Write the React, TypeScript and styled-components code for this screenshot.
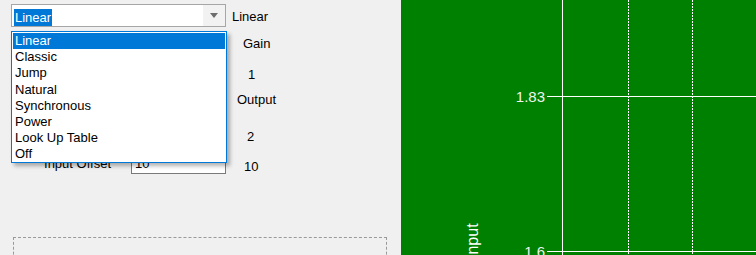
import { createGlobalStyle, styled } from 'styled-components';

const GlobalStyle = createGlobalStyle`
  html, body {
    margin: 0;
    padding: 0;
    background: #f0f0f0;
  }

  body {
    font-family: 'Liberation Sans', Arial, sans-serif;
    font-size: 13px;
    color: #000;
  }
`;

const curveTypes = ['Linear', 'Classic', 'Jump', 'Natural', 'Synchronous', 'Power', 'Look Up Table', 'Off'];

const values = [
  { text: 'Linear', top: 9, left: 6 },
  { text: 'Gain', top: 11, left: 17 },
  { text: '1', top: 15, left: 22 },
  { text: 'Output', top: 9, left: 11 },
  { text: '2', top: 21, left: 21 },
  { text: '10', top: 14, left: 18 },
];

const App = () => {
  return (
    <>
      <GlobalStyle />
      <Window>
        <SettingsPanel>
          <Controls>
            <ComboBox>
              <ComboText>
                <Selection>Linear</Selection>
              </ComboText>
              <ComboButton>
                <Arrow />
              </ComboButton>
            </ComboBox>
            <FieldRow>
              <FieldLabel>Input Offset</FieldLabel>
              <TextBox>10</TextBox>
            </FieldRow>
            <GroupBox />
          </Controls>
          <ValueColumn>
            {values.map((v, i) => (
              <Value key={i} $top={v.top} $left={v.left}>
                {v.text}
              </Value>
            ))}
          </ValueColumn>
          <DropList>
            {curveTypes.map((name, i) => (
              <ListItem key={name} $selected={i === 0}>
                {name}
              </ListItem>
            ))}
          </DropList>
        </SettingsPanel>
        <ChartPanel>
          <svg width="355" height="255" viewBox="0 0 355 255">
            <line x1="161.5" y1="0" x2="161.5" y2="255" stroke="#fff" strokeWidth="1" />
            <line x1="227.5" y1="0" x2="227.5" y2="255" stroke="#fff" strokeWidth="1" strokeDasharray="2 1" />
            <line x1="291.5" y1="0" x2="291.5" y2="255" stroke="#fff" strokeWidth="1" strokeDasharray="2 1" />
            <line x1="146" y1="96.5" x2="355" y2="96.5" stroke="#fff" strokeWidth="1" />
            <line x1="146" y1="251.5" x2="355" y2="251.5" stroke="#fff" strokeWidth="1" />
            <AxisText x="144" y="102" textAnchor="end">
              1.83
            </AxisText>
            <AxisText x="144" y="257" textAnchor="end">
              1.6
            </AxisText>
            <AxisTitle x="0" y="0" transform="translate(77 259) rotate(-90)">
              Input
            </AxisTitle>
          </svg>
        </ChartPanel>
      </Window>
    </>
  );
};

export default App;

const Window = styled.div`
  width: 756px;
  height: 255px;
  overflow: hidden;

  display: flex;
`;

const SettingsPanel = styled.div`
  position: relative;
  width: 401px;
  flex-shrink: 0;
  padding-left: 11px;
  box-sizing: border-box;

  display: flex;
  background: #f0f0f0;
`;

const Controls = styled.div`
  width: 215px;
  flex-shrink: 0;
  padding-top: 4px;

  display: flex;
  flex-direction: column;
`;

const ComboBox = styled.div`
  width: 215px;
  height: 27px;
  box-sizing: border-box;

  display: flex;
  border: 1px solid #a6a6a6;
  background: #fff;
`;

const ComboText = styled.div`
  flex: 1;
  padding: 4px 0 0 2px;
`;

const Selection = styled.span`
  display: inline-block;
  padding: 1px 1px;
  line-height: 15px;
  background: #0078d7;
  color: #fff;
`;

const ComboButton = styled.div`
  width: 22px;

  display: flex;
  align-items: center;
  justify-content: center;
  background: #f2f2f2;
`;

const Arrow = styled.div`
  width: 0;
  height: 0;
  border-left: 4px solid transparent;
  border-right: 4px solid transparent;
  border-top: 5px solid #6d6d6d;
`;

const FieldRow = styled.div`
  margin-top: 126px;
  height: 21px;

  display: flex;
  align-items: center;
`;

const FieldLabel = styled.span`
  width: 120px;
  flex-shrink: 0;
  padding-right: 20px;
  box-sizing: border-box;
  text-align: right;
`;

const TextBox = styled.div`
  width: 95px;
  height: 21px;
  flex-shrink: 0;
  box-sizing: border-box;
  padding: 2px 0 0 3px;

  border: 1px solid #7a7a7a;
  background: #fff;
`;

const GroupBox = styled.div`
  margin: 63px 0 0 2px;
  width: 372px;
  height: 40px;
  flex-shrink: 0;

  border: 1px dashed #9a9a9a;
`;

const ValueColumn = styled.div`
  display: flex;
  flex-direction: column;
`;

const Value = styled.span<{ $top: number; $left: number }>`
  margin: ${(p) => p.$top}px 0 0 ${(p) => p.$left}px;
  line-height: 16px;
  white-space: nowrap;
`;

const DropList = styled.div`
  position: absolute;
  left: 11px;
  top: 31px;
  width: 216px;
  height: 132px;
  box-sizing: border-box;
  padding: 1px 1px;

  border: 1px solid #0078d7;
  background: #fff;
  box-shadow: 3px 3px 4px rgba(0, 0, 0, 0.3);
`;

const ListItem = styled.div<{ $selected: boolean }>`
  height: 16.2px;
  line-height: 16px;
  padding-left: 2px;

  background: ${(p) => (p.$selected ? '#0078d7' : 'transparent')};
  color: ${(p) => (p.$selected ? '#fff' : '#000')};
`;

const ChartPanel = styled.div`
  flex: 1;
  height: 255px;
  background: #008000;

  svg {
    display: block;
  }
`;

const AxisText = styled.text`
  font-family: 'Liberation Sans', Arial, sans-serif;
  font-size: 15px;
  fill: #eef5ee;
`;

const AxisTitle = styled.text`
  font-family: 'Liberation Sans', Arial, sans-serif;
  font-size: 16px;
  fill: #fff;
`;
